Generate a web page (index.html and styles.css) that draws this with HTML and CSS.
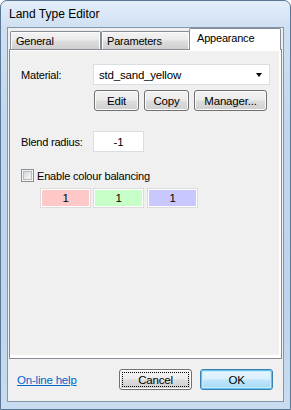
FILE: index.html
```html
<!DOCTYPE html>
<html>
<head>
<meta charset="utf-8">
<title>Land Type Editor</title>
<link rel="stylesheet" href="styles.css">
</head>
<body>
<div class="window">
  <div class="titlebar">Land Type Editor</div>
  <div class="client">
    <div class="tabs">
      <div class="tab tab-general">General</div>
      <div class="tab tab-params">Parameters</div>
      <div class="tab tab-active">Appearance</div>
    </div>
    <div class="panel">
      <div class="row row-material">
        <div class="label">Material:</div>
        <div class="combo">
          <span class="combo-text">std_sand_yellow</span>
          <span class="combo-arrow"></span>
        </div>
      </div>
      <div class="row row-buttons">
        <div class="btn btn-edit">Edit</div>
        <div class="btn btn-copy">Copy</div>
        <div class="btn btn-manager">Manager...</div>
      </div>
      <div class="row row-blend">
        <div class="label">Blend radius:</div>
        <div class="field">-1</div>
      </div>
      <div class="row row-check">
        <span class="checkbox"></span>
        <span class="check-label">Enable colour balancing</span>
      </div>
      <div class="row row-colours">
        <div class="swatch swatch-red">1</div>
        <div class="swatch swatch-green">1</div>
        <div class="swatch swatch-blue">1</div>
      </div>
    </div>
    <div class="footer">
      <a class="help" href="#">On-line help</a>
      <div class="footer-buttons">
        <div class="btn btn-wide btn-focus"><span class="focus-ring">Cancel</span></div>
        <div class="btn btn-wide btn-default">OK</div>
      </div>
    </div>
  </div>
</div>
</body>
</html>
```

FILE: styles.css
```css
html, body {
  margin: 0;
  padding: 0;
  width: 291px;
  height: 410px;
  overflow: hidden;
  background: #ffffff;
}

body {
  font-family: "Liberation Sans", Arial, sans-serif;
  font-size: 11px;
  letter-spacing: -0.2px;
  color: #000;
}

.window {
  box-sizing: border-box;
  width: 291px;
  height: 410px;
  border: 1px solid #5a7796;
  border-radius: 7px 7px 0 0;
  background: linear-gradient(180deg, #e4eef9 0px, #cfe0f2 26px, #c2d7ee 120px, #bed4ec 300px, #c9dcf0 410px);
  padding: 0 6px 7px 6px;
  display: flex;
  flex-direction: column;
}

.titlebar {
  height: 26px;
  line-height: 27px;
  padding-left: 2px;
  font-size: 12px;
  letter-spacing: 0;
  color: #000;
  box-shadow: none;
}

.client {
  flex: 1;
  border: 1px solid #8496ab;
  background: #f0f0f0;
  display: flex;
  flex-direction: column;
}

.tabs {
  display: flex;
  align-items: flex-end;
  height: 21px;
  padding-left: 2px;
  position: relative;
  z-index: 1;
}

.tab {
  box-sizing: border-box;
  height: 18px;
  border: 1px solid #898c95;
  border-bottom: none;
  border-radius: 2px 2px 0 0;
  background: linear-gradient(180deg, #f3f3f3 0%, #ebebeb 45%, #dddddd 55%, #cfcfcf 100%);
  box-shadow: inset 1px 1px 0 #fcfcfc, inset -1px 0 0 #fcfcfc;
  padding-left: 5px;
  line-height: 18px;
}

.tab-general { width: 91px; }
.tab-params { width: 89px; margin-left: 0; }

.tab-active {
  width: 92px;
  height: 22px;
  margin-left: -1px;
  margin-bottom: -1px;
  background: #ffffff;
  box-shadow: none;
  padding-left: 7px;
  line-height: 19px;
}

.panel {
  box-sizing: border-box;
  height: 310px;
  margin: 0 1px 0 1px;
  border: 1px solid #898c95;
  background: #f0f0f0;
  box-shadow: inset 0 1px 0 #ffffff, inset -2px -3px 0 #ffffff;
  padding: 14px 0 0 11px;
  display: flex;
  flex-direction: column;
}

.row {
  display: flex;
  align-items: center;
}

.label {
  width: 72px;
  flex: none;
}

.combo {
  box-sizing: border-box;
  width: 177px;
  height: 21px;
  border: 1px solid #dadde2;
  background: #ffffff;
  display: flex;
  align-items: center;
  justify-content: space-between;
  padding: 0 7px 0 5px;
  font-size: 11.5px;
}

.combo-arrow {
  width: 0;
  height: 0;
  border-left: 3.5px solid transparent;
  border-right: 3.5px solid transparent;
  border-top: 4px solid #000;
}

.row-buttons {
  margin-top: 5px;
  margin-left: 73px;
  gap: 5px;
}

.btn {
  box-sizing: border-box;
  height: 21px;
  border: 1px solid #707070;
  border-radius: 3px;
  background: linear-gradient(180deg, #f2f2f2 0%, #ebebeb 48%, #dddddd 52%, #cfcfcf 100%);
  box-shadow: inset 0 0 0 1px #fbfbfb;
  display: flex;
  align-items: center;
  justify-content: center;
  font-size: 11.5px;
}

.btn-edit { width: 45px; }
.btn-copy { width: 45px; }
.btn-manager { width: 73px; }

.row-blend {
  margin-top: 20px;
}

.field {
  box-sizing: border-box;
  width: 51px;
  height: 21px;
  border: 1px solid #dadde2;
  background: #ffffff;
  display: flex;
  align-items: center;
  justify-content: center;
  font-size: 11.5px;
}

.row-check {
  margin-top: 17px;
  height: 13px;
  gap: 3px;
}

.checkbox {
  box-sizing: border-box;
  width: 13px;
  height: 13px;
  border: 1px solid #8e8f8f;
  background: linear-gradient(135deg, #c9cdd2 0%, #eceef0 60%, #f6f6f6 100%);
  box-shadow: inset 0 0 0 1px #f4f4f4, inset 0 0 0 2px #b6bcc4;
}

.row-colours {
  margin-top: 6px;
  margin-left: 19px;
  gap: 2px;
}

.swatch {
  box-sizing: border-box;
  width: 51px;
  height: 20px;
  border: 1px solid #dcdcdc;
  box-shadow: inset 0 0 0 1px #ffffff;
  display: flex;
  align-items: center;
  justify-content: center;
  font-size: 11.5px;
}

.swatch-red { background: #ffc8c8; }
.swatch-green { background: #c8ffc8; }
.swatch-blue { background: #c8c8ff; width: 51px; margin-left: 1px; }

.footer {
  display: flex;
  align-items: center;
  justify-content: space-between;
  margin-top: 10px;
  padding: 0 10px 0 9px;
}

.help {
  color: #0066cc;
  text-decoration: underline;
  font-size: 11.5px;
}

.footer-buttons {
  display: flex;
  gap: 8px;
}

.btn-wide {
  width: 73px;
}

.btn-focus {
  padding: 2px;
}

.focus-ring {
  box-sizing: border-box;
  flex: 1;
  align-self: stretch;
  border: 1px dotted #000;
  display: flex;
  align-items: center;
  justify-content: center;
}

.btn-default {
  border-color: #3c7fb1;
  background: linear-gradient(180deg, #eaf6fd 0%, #d9f0fc 48%, #bee6fd 52%, #a7d9f5 100%);
  box-shadow: inset 0 0 0 1px #61c4f0, inset 0 0 0 2px #c9ecfb;
}
```
